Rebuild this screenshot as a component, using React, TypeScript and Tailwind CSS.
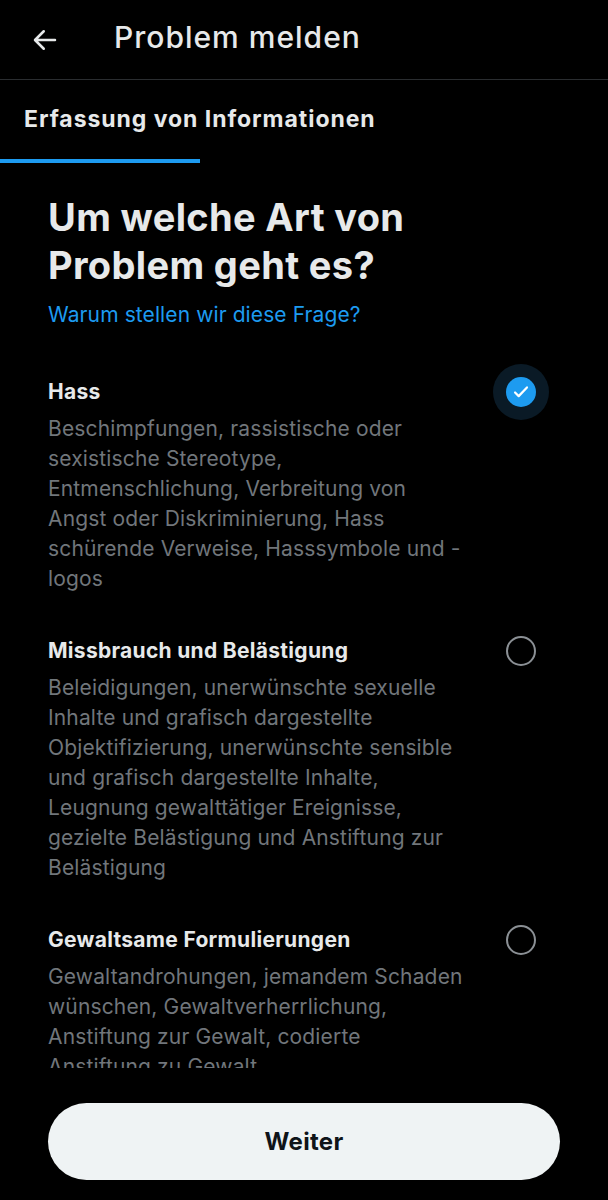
import React from "react";

const options = [
  {
    title: "Hass",
    lines: [
      "Beschimpfungen, rassistische oder",
      "sexistische Stereotype,",
      "Entmenschlichung, Verbreitung von",
      "Angst oder Diskriminierung, Hass",
      "schürende Verweise, Hasssymbole und -",
      "logos",
    ],
    checked: true,
  },
  {
    title: "Missbrauch und Belästigung",
    lines: [
      "Beleidigungen, unerwünschte sexuelle",
      "Inhalte und grafisch dargestellte",
      "Objektifizierung, unerwünschte sensible",
      "und grafisch dargestellte Inhalte,",
      "Leugnung gewalttätiger Ereignisse,",
      "gezielte Belästigung und Anstiftung zur",
      "Belästigung",
    ],
    checked: false,
  },
  {
    title: "Gewaltsame Formulierungen",
    lines: [
      "Gewaltandrohungen, jemandem Schaden",
      "wünschen, Gewaltverherrlichung,",
      "Anstiftung zur Gewalt, codierte",
      "Anstiftung zu Gewalt",
    ],
    checked: false,
  },
];

function Radio({ checked }: { checked: boolean }) {
  if (checked) {
    return (
      <div className="w-[56px] h-[56px] rounded-full bg-[#0a1a26] flex items-center justify-center">
        <div className="w-[30px] h-[30px] rounded-full bg-[#1d9bf0] flex items-center justify-center">
          <svg width="22" height="22" viewBox="0 0 24 24" fill="none">
            <path d="M5.5 12.5l4 4L18.5 7" stroke="white" strokeWidth="2.4" strokeLinecap="round" strokeLinejoin="round" />
          </svg>
        </div>
      </div>
    );
  }
  return (
    <div className="w-[56px] h-[56px] flex items-center justify-center">
      <div className="w-[30px] h-[30px] rounded-full border-2 border-[#8b9095]" />
    </div>
  );
}

export default function App() {
  return (
    <div
      className="w-[608px] h-[1200px] bg-black text-[#e7e9ea] flex flex-col overflow-hidden"
      style={{ fontFamily: "Inter, 'Noto Sans', sans-serif" }}
    >
      <div className="h-[80px] flex items-center border-b border-[#2a2d30] shrink-0">
        <div className="w-[114px] pl-[30px] flex items-center">
          <svg width="30" height="30" viewBox="0 0 24 24" fill="none">
            <path d="M20 12H4.5M11 5l-7 7 7 7" stroke="#e7e9ea" strokeWidth="2" strokeLinecap="round" strokeLinejoin="round" />
          </svg>
        </div>
        <div className="text-[30px] font-medium tracking-[1px] leading-none -mt-[6px] text-[#e7e9ea] whitespace-nowrap">
          Problem melden
        </div>
      </div>
      <div className="h-[83px] shrink-0 flex flex-col">
        <div className="w-[200px] flex-1 flex flex-col">
          <div className="flex-1 flex items-center pl-[24px] whitespace-nowrap text-[23px] font-bold tracking-[0.95px] text-[#e7e9ea]">
            Erfassung von Informationen
          </div>
          <div className="h-[4px] bg-[#1d9bf0]" />
        </div>
      </div>
      <div className="flex-1 overflow-hidden px-[48px] pt-[30px]">
        <h1 className="text-[38px] font-bold leading-[48px] text-[#e7e9ea] whitespace-nowrap tracking-[0.35px]">
          Um welche Art von
          <br />
          Problem geht es?
        </h1>
        <div className="mt-[11px] text-[21px] leading-[30px] text-[#1d9bf0] whitespace-nowrap tracking-[0.1px]">
          Warum stellen wir diese Frage?
        </div>
        <div className="mt-[47px] flex flex-col gap-[42px]">
          {options.map((o) => (
            <div key={o.title} className="flex items-start">
              <div className="w-[430px] shrink-0">
                <div className="text-[21px] font-bold leading-[30px] text-[#e7e9ea] whitespace-nowrap tracking-[0.3px]">
                  {o.title}
                </div>
                <div className="mt-[7px] text-[21px] leading-[30px] text-[#71767b] tracking-[0.15px]">
                  {o.lines.map((l, i) => (
                    <div key={i} className="whitespace-nowrap">
                      {l}
                    </div>
                  ))}
                </div>
              </div>
              <div className="ml-[15px] -mt-[13px]">
                <Radio checked={o.checked} />
              </div>
            </div>
          ))}
        </div>
      </div>
      <div className="shrink-0 px-[48px] pt-[35px] pb-[20px]">
        <div className="h-[77px] rounded-full bg-[#eff3f4] flex items-center justify-center text-[24px] font-bold text-[#0f1419] tracking-[0.3px]">
          Weiter
        </div>
      </div>
    </div>
  );
}
